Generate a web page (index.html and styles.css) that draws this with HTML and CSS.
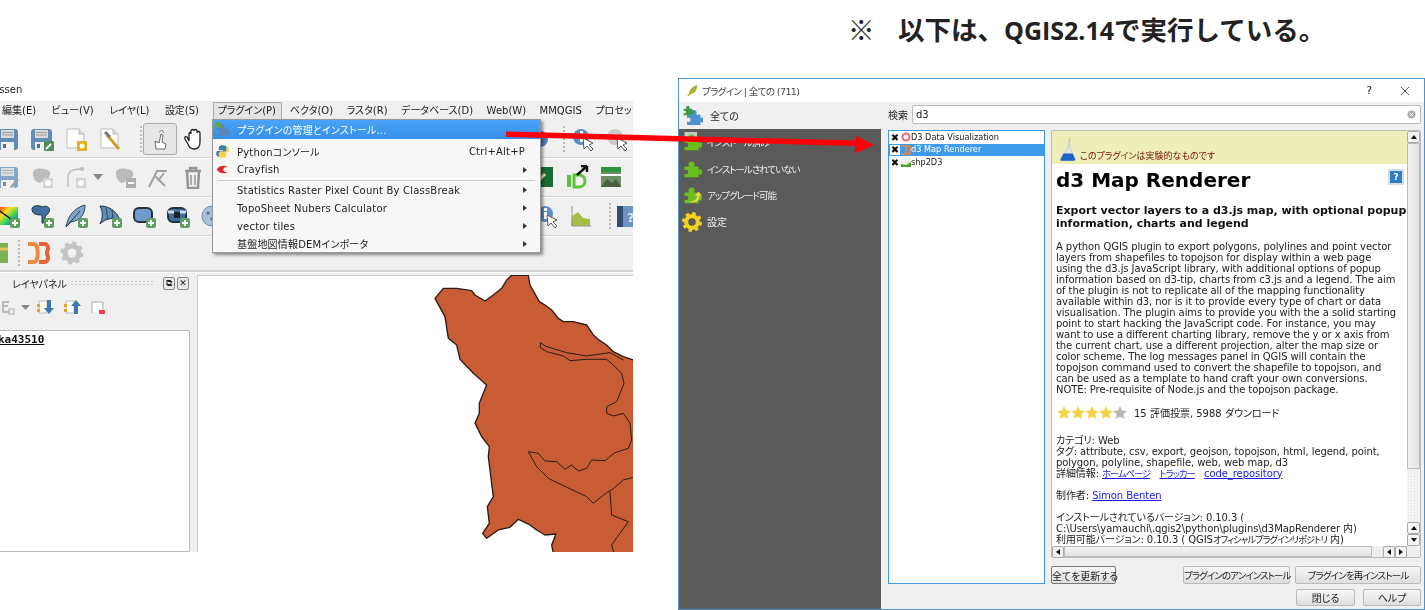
FILE: index.html
```html
<!DOCTYPE html>
<html lang="ja">
<head>
    <meta charset="UTF-8">
    <title>QGIS d3 Map Renderer</title>
    <link rel="stylesheet" href="styles.css">
</head>
<body>

<svg class="sprite" width="0" height="0">
    <defs>
        <g id="i-plus"><rect x="14" y="14" width="10" height="10" rx="2" fill="#5f9e63"/><path d="M19 16v6M16 19h6" stroke="#fff" stroke-width="2"/></g>
        <g id="i-save"><rect x="1" y="2" width="21" height="21" rx="3" fill="#5f8db8"/><rect x="5" y="3" width="13" height="8" fill="#d9d9d9"/><path d="M6 5.500h11M6 8h11" stroke="#999"/><rect x="5" y="15" width="13" height="8" fill="#f0f0f0"/><rect x="7" y="17" width="3" height="4" fill="#4c6f91"/></g>
        <g id="i-page"><path d="M3 2h12l5 5v14H3z" fill="#fff" stroke="#bbb"/><path d="M15 2v5h5" fill="#ddd" stroke="#bbb"/></g>
        <g id="i-blob"><path d="M3 8c0-5 8-5 11-4s7 1 6 6-4 3-6 5-4 4-7 2-4-5-4-9z"/></g>
        <path id="i-puzzle" d="M3 9h5.500c-2-4 .5-6 3-6s5 2 3 6H20v4c3-2 4 0 4 2.500s-1 4.500-4 2.500v4H3v-4.500c3 1.500 4.500 0 4.500-2s-1.500-3.500-4.500-2z"/>
        <g id="i-cursor"><path d="M12 11l1 11 3-3 4 5 2-2-4-4 4-2z" fill="#fff" stroke="#555"/></g>
        <g id="i-info"><circle cx="10" cy="10" r="8" fill="#5c8fc4"/><rect x="9" y="8" width="3" height="7" fill="#fff"/><rect x="9" y="4" width="3" height="3" fill="#fff"/></g>
        <path id="i-star" d="M7 0l2 4.500 5 .5-3.700 3.300 1 4.700L7 10.500 2.700 13l1-4.700L0 5l5-.5z"/>
        <filter id="rough" x="-5%" y="-5%" width="110%" height="110%">
            <feTurbulence type="fractalNoise" baseFrequency=".09" numOctaves="2" seed="4"/>
            <feDisplacementMap in="SourceGraphic" scale="3.500"/>
        </filter>
    </defs>
</svg>

<div class="slide">
    <h1 class="note"><span class="note-mark">※</span>以下は、<span class="note-latin">QGIS2.14</span>で実行している。</h1>

    <!-- QGIS main window, cropped on both sides -->
    <div class="qgis">
        <div class="qgis-title"><span>Essen</span></div>
        <div class="menubar">
            <span class="menubar-item">編集(E)</span>
            <span class="menubar-item">ビュー(V)</span>
            <span class="menubar-item">レイヤ(L)</span>
            <span class="menubar-item">設定(S)</span>
            <span class="menubar-item active">プラグイン(P)</span>
            <span class="menubar-item">ベクタ(O)</span>
            <span class="menubar-item">ラスタ(R)</span>
            <span class="menubar-item">データベース(D)</span>
            <span class="menubar-item">Web(W)</span>
            <span class="menubar-item">MMQGIS</span>
            <span class="menubar-item">プロセッシング</span>
        </div>

        <div class="toolbar row-a">
            <div class="tool"><svg viewBox="0 0 24 24"><use href="#i-save"/></svg></div>
            <div class="tool"><svg viewBox="0 0 24 24"><use href="#i-save"/><rect x="14" y="14" width="10" height="10" rx="1" fill="#4f8f55"/><path d="M16 22l5-5" stroke="#fff" stroke-width="2"/></svg></div>
            <div class="tool"><svg viewBox="0 0 24 24"><use href="#i-page"/><rect x="13" y="14" width="10" height="10" rx="1" fill="#e0b020"/><circle cx="18" cy="19" r="2.500" fill="#fff"/></svg></div>
            <div class="tool"><svg viewBox="0 0 24 24"><use href="#i-page"/><path d="M9 8l12 14" stroke="#c9a227" stroke-width="3"/><path d="M7 5l5 5" stroke="#777" stroke-width="3"/></svg></div>
            <div class="dots dots-a"></div>
            <div class="tool pressed"><svg viewBox="0 0 24 24"><path d="M8 22l-1-8 4 2 2-9 2 1-1 7 4 2-1 5z" fill="#fff" stroke="#666"/><path d="M11 5l3-2 2 3" fill="none" stroke="#888"/></svg></div>
            <div class="tool"><svg viewBox="0 0 24 24"><path d="M7 14V7c0-2 2-2 2 0V4c0-2 3-2 3 0v0c0-2 3-2 3 0v2c0-2 3-2 3 0v9c0 4-2 7-6 7-3 0-5-2-6-5l-3-5c-1-2 1-3 2-2z" fill="#fff" stroke="#222" stroke-width="1.300"/></svg></div>
            <div class="toolbar-right">
                <div class="tool tool-cut"><svg viewBox="0 0 24 24"><circle cx="12" cy="12" r="8" fill="#4c7fb5"/></svg></div>
                <div class="dots"></div>
                <div class="tool"><svg viewBox="0 0 24 24"><use href="#i-info"/><use href="#i-cursor"/></svg></div>
                <div class="tool"><svg viewBox="0 0 24 24"><circle cx="10" cy="10" r="8" fill="#ccc"/><circle cx="10" cy="10" r="3" fill="#f0f0f0"/><use href="#i-cursor"/></svg></div>
            </div>
        </div>

        <div class="toolbar row-b">
            <div class="tool off"><svg viewBox="0 0 24 24"><use href="#i-save"/><path d="M14 22l7-9 2 2-7 8z" fill="#888"/></svg></div>
            <div class="tool off"><svg viewBox="0 0 24 24"><use href="#i-blob" fill="#aaa"/><rect x="13" y="13" width="10" height="10" fill="#ccc"/><circle cx="18" cy="18" r="3" fill="#fff"/></svg></div>
            <div class="tool off"><svg viewBox="0 0 24 24"><path d="M4 22V12C4 6 10 4 17 4" fill="none" stroke="#aaa" stroke-width="1.500"/><circle cx="18" cy="4" r="2" fill="#aaa"/><rect x="12" y="13" width="10" height="10" fill="#ccc"/><circle cx="17" cy="18" r="3" fill="#fff"/></svg></div>
            <div class="caret"></div>
            <div class="tool off"><svg viewBox="0 0 24 24"><use href="#i-blob" fill="#aaa"/><rect x="13" y="13" width="10" height="10" fill="#999"/><path d="M15 18h6" stroke="#fff" stroke-width="2"/></svg></div>
            <div class="tool off"><svg viewBox="0 0 24 24"><path d="M2 22L10 6h10M8 11l10 10M17 8l-6 8" fill="none" stroke="#888" stroke-width="2"/></svg></div>
            <div class="tool off"><svg viewBox="0 0 24 24"><path d="M4 6h16M9 6V3h6v3M6 6l1 17h10l1-17" fill="none" stroke="#777" stroke-width="2.500"/><path d="M10 10v10M14 10v10" stroke="#777" stroke-width="1.500"/></svg></div>
            <div class="toolbar-right">
                <div class="tool"><svg viewBox="0 0 24 24"><rect x="2" y="2" width="20" height="20" fill="#1d6b34"/><path d="M7 16l7-7" stroke="#e5e29a" stroke-width="3"/></svg></div>
                <div class="tool"><svg viewBox="0 0 24 24"><rect x="2" y="10" width="4" height="12" fill="#5cc43c"/><path d="M9 10h5c8 0 8 12 0 12H9z" fill="none" stroke="#5cc43c" stroke-width="3"/><path d="M12 10L22 1M22 1h-6M22 1v6" stroke="#111" stroke-width="2.500"/></svg></div>
                <div class="tool"><svg viewBox="0 0 24 24"><rect x="2" y="2" width="20" height="20" fill="#6f8f62"/><rect x="2" y="2" width="20" height="5" fill="#2e9440"/><rect x="2" y="9" width="20" height="2" fill="#fff"/><path d="M2 22l6-8 5 4 4-4 5 8z" fill="#4a5d45"/></svg></div>
            </div>
        </div>

        <div class="toolbar row-c">
            <div class="tool"><svg viewBox="0 0 24 24"><defs><linearGradient id="rainbow" x1="0" y1="0" x2="1" y2="1"><stop offset="0" stop-color="#ff2020"/><stop offset=".35" stop-color="#ffe020"/><stop offset=".65" stop-color="#20d060"/><stop offset="1" stop-color="#2040ff"/></linearGradient></defs><rect x="1" y="3" width="21" height="18" fill="url(#rainbow)"/><path d="M1 5l18 13" stroke="#111" stroke-width="1.500"/><use href="#i-plus"/></svg></div>
            <div class="tool"><svg viewBox="0 0 24 24"><path d="M2 5c0-4 8-4 10-2 4-2 9 0 7 5-1 3-4 3-4 6s-1 6-3 5V11C6 11 2 10 2 5z" fill="#3e6f9e" stroke="#234"/><use href="#i-plus"/></svg></div>
            <div class="tool"><svg viewBox="0 0 24 24"><path d="M2 23C4 12 10 4 21 1c0 8-3 15-14 17z" fill="#7fa6cb" stroke="#345"/><path d="M2 23L16 7" stroke="#234"/><use href="#i-plus"/></svg></div>
            <div class="tool"><svg viewBox="0 0 24 24"><path d="M2 2c8 0 16 4 20 14-6-3-14-2-20 4 3-6 3-12 0-18z" fill="#5f8db8" stroke="#234"/><path d="M8 4l2 12M14 6l1 8" stroke="#234" stroke-width=".8"/><use href="#i-plus"/></svg></div>
            <div class="tool"><svg viewBox="0 0 24 24"><rect x="2" y="4" width="18" height="14" rx="5" fill="#6f9bd0" stroke="#234" stroke-width="2"/><use href="#i-plus"/></svg></div>
            <div class="tool"><svg viewBox="0 0 24 24"><rect x="2" y="4" width="18" height="14" rx="5" fill="#3e6f9e" stroke="#234" stroke-width="2"/><rect x="8" y="8" width="6" height="6" fill="#222"/><path d="M2 8h6M14 8h6" stroke="#cfd8e3" stroke-width="3"/><use href="#i-plus"/></svg></div>
            <div class="tool"><svg viewBox="0 0 24 24"><circle cx="12" cy="12" r="10" fill="#a9bfdc" stroke="#6f8fb5"/><circle cx="8" cy="9" r="1.500" fill="#567"/><circle cx="15" cy="8" r="1.500" fill="#567"/><circle cx="12" cy="15" r="1.500" fill="#567"/></svg></div>
            <div class="toolbar-right">
                <div class="tool"><svg viewBox="0 0 24 24"><use href="#i-info"/><use href="#i-cursor"/></svg></div>
                <div class="tool"><svg viewBox="0 0 24 24"><path d="M2 22l1-10 6-4 5 6 7 1v7z" fill="#a3bf45"/><path d="M3 2v20h19" fill="none" stroke="#999"/></svg></div>
                <div class="dots"></div>
                <div class="tool tool-help"><svg viewBox="0 0 24 24"><rect x="1" y="2" width="23" height="21" fill="#2f4d6e"/><rect x="7" y="2" width="17" height="21" fill="#6d93bf"/><text x="11" y="18" class="help-mark">?</text></svg></div>
            </div>
        </div>

        <div class="toolbar row-d">
            <div class="tool"><svg viewBox="0 0 24 24"><rect x="4" y="2" width="16" height="20" fill="#7fae55"/><path d="M4 8h16" stroke="#e8c25a" stroke-width="3"/></svg></div>
            <div class="dots"></div>
            <div class="tool"><svg viewBox="0 0 24 24"><path d="M2 3h6c5 0 5 18 0 18H2" fill="none" stroke="#f0883a" stroke-width="4"/><path d="M13 3h6c4 0 4 9 0 9 4 0 4 9 0 9h-6" fill="none" stroke="#e8623a" stroke-width="4"/></svg></div>
            <div class="tool"><svg viewBox="0 0 24 24"><circle cx="12" cy="12" r="7" fill="none" stroke="#c4c4c4" stroke-width="5"/><circle cx="12" cy="12" r="10" fill="none" stroke="#c4c4c4" stroke-width="3" stroke-dasharray="4 3.850"/></svg></div>
        </div>

        <div class="workspace">
            <div class="layer-panel">
                <div class="panel-head">
                    <span class="panel-title">レイヤパネル</span>
                    <span class="panel-grip"></span>
                    <span class="panel-btn">&#10697;</span>
                    <span class="panel-btn">&#10005;</span>
                </div>
                <div class="panel-tools">
                    <svg viewBox="0 0 110 20" class="panel-icons">
                        <path d="M9 4H3v4h5M3 8v6h6" fill="none" stroke="#aaa" stroke-width="1.500"/>
                        <rect x="9" y="11" width="5" height="5" fill="none" stroke="#aaa"/>
                        <path d="M21 7h9l-4.500 5z" fill="#888"/>
                        <path d="M39 3h8v12h-8z" fill="#fff" stroke="#bbb"/><rect x="37" y="6" width="3" height="3" fill="#f0a020"/><rect x="37" y="11" width="3" height="3" fill="#f0a020"/>
                        <path d="M47 2v8h-3l5 6 5-6h-3V2z" fill="#3f78b0"/>
                        <path d="M66 3h8v12h-8z" fill="#fff" stroke="#bbb"/><rect x="64" y="6" width="3" height="3" fill="#f0a020"/><rect x="64" y="11" width="3" height="3" fill="#f0a020"/>
                        <path d="M74 16V8h-3l5-6 5 6h-3v8z" fill="#3f78b0"/>
                        <path d="M92 15V4h11v8" fill="#fff" stroke="#aaa"/>
                        <rect x="99" y="12" width="6" height="4" fill="#f04050"/>
                    </svg>
                </div>
                <div class="layer-tree"><span class="layer-name">ka43510</span></div>
            </div>
            <div class="map">
                <svg viewBox="0 0 436 277" class="map-svg">
                    <g transform="translate(233 -5) scale(.3333)" filter="url(#rough)" stroke="#2a1c15" fill="none" stroke-width="3" stroke-linejoin="round">
                        <path fill="#c85c36" stroke-width="4" d="M245 16 L295 16 L300 45 L328 95 L345 105 L365 120 L385 145 L400 155 L430 155 L470 165 L490 195 L510 212 L530 225 L550 245 L580 260 L640 280 L640 860 L372 860 L365 825 L378 792 L345 795 L320 780 L300 765 L265 748 L240 772 L205 780 L170 805 L158 790 L178 760 L172 710 L190 680 L185 640 L180 600 L175 560 L178 530 L155 500 L135 460 L148 430 L148 400 L170 345 L130 310 L90 268 L80 225 L55 205 L45 140 L15 85 L40 55 L80 55 L125 62 L135 75 L165 93 L190 75 L215 55 L230 30 Z"/>
                        <path d="M332 218 L345 228 L410 248 L470 258 L540 248 L580 270"/>
                        <path d="M332 218 L330 232 L350 245 L400 258 L420 272 L470 268 L530 268 L550 285 L575 310 L582 340 L560 395 L530 410 L530 430 L550 438 L580 430 L600 460 L605 510 L595 535 L555 548 L525 572 L485 570 L470 595 L445 603 L425 585 L405 598 L380 575 L345 573 L325 550 L295 545 L320 590 L355 625 L375 635 L470 680 L490 700 L530 668 L545 660 L580 630 L640 615"/>
                        <path d="M540 665 L545 735 L595 755 L570 790 L545 825 L555 860"/>
                    </g>
                </svg>
            </div>
        </div>

        <!-- plugin menu opened over the toolbars -->
        <div class="menu">
            <div class="menu-row selected">
                <svg class="menu-icon" viewBox="0 0 24 24"><use href="#i-puzzle" fill="#5c86b5"/><use href="#i-puzzle" fill="#66a64a" transform="translate(-3 -4) scale(.6)"/></svg>
                <span class="menu-label">プラグインの管理とインストール...</span>
            </div>
            <div class="menu-row first">
                <svg class="menu-icon" viewBox="0 0 24 24"><path d="M12 2c-5 0-6 2-6 5v3h7v1H4c-3 0-3 9 1 9h2v-4c0-2 2-3 4-3h5c2 0 3-1 3-3V7c0-3-2-5-7-5z" fill="#3f7cb0"/><path d="M12 22c5 0 6-2 6-5v-3h-6v-1h8c3 0 3-9-1-9h-1v4c0 3-1 4-3 4H9c-2 0-3 1-3 3v2c0 3 2 5 6 5z" fill="#f5cf45"/></svg>
                <span class="menu-label">Pythonコンソール</span>
                <span class="menu-key">Ctrl+Alt+P</span>
            </div>
            <div class="menu-row crayfish">
                <svg class="menu-icon" viewBox="0 0 24 24"><path d="M20 7C12 4 5 7 3 12c2 5 9 8 17 5-5-1-8-3-7-5 0-2 3-4 7-5z" fill="#e3262b"/></svg>
                <span class="menu-label">Crayfish</span>
                <span class="menu-arrow"></span>
            </div>
            <div class="menu-sep"></div>
            <div class="menu-row"><span class="menu-icon"></span><span class="menu-label">Statistics Raster Pixel Count By ClassBreak</span><span class="menu-arrow"></span></div>
            <div class="menu-row"><span class="menu-icon"></span><span class="menu-label">TopoSheet Nubers Calculator</span><span class="menu-arrow"></span></div>
            <div class="menu-row"><span class="menu-icon"></span><span class="menu-label">vector tiles</span><span class="menu-arrow"></span></div>
            <div class="menu-row last"><span class="menu-icon"></span><span class="menu-label">基盤地図情報DEMインポータ</span><span class="menu-arrow"></span></div>
        </div>
    </div>

    <!-- plugin manager dialog -->
    <div class="dialog">
        <div class="dialog-title">
            <svg class="dialog-logo" viewBox="0 0 14 14"><path d="M3 12C3 7 6 3 12 1c0 6-3 9-7 10z" fill="#8cb63c"/><path d="M2 13L10 4" stroke="#d9a520" stroke-width="1.500"/></svg>
            <span class="dialog-name">プラグイン | 全ての (711)</span>
            <span class="win-help">?</span>
            <svg class="win-close" viewBox="0 0 12 12"><path d="M1 1l10 10M11 1L1 11" stroke="#333" stroke-width="1"/></svg>
        </div>
        <div class="dialog-body">
            <div class="sidebar">
                <div class="side-item top">
                    <svg class="side-icon" viewBox="0 0 24 24"><use href="#i-puzzle" fill="#4c93d0" transform="translate(2 2) scale(.95)"/><use href="#i-puzzle" fill="#3f9b48" transform="translate(-1 -2) scale(.6)"/></svg>
                    <span>全ての</span>
                </div>
                <div class="side-item">
                    <svg class="side-icon" viewBox="0 0 24 24"><rect x="3" y="0" width="15" height="12" fill="#c8c8c8"/><use href="#i-puzzle" fill="#6abf1c"/></svg>
                    <span class="narrow">インストール済み</span>
                </div>
                <div class="side-item">
                    <svg class="side-icon" viewBox="0 0 24 24"><use href="#i-puzzle" fill="#6abf1c"/></svg>
                    <span class="narrow">インストールされていない</span>
                </div>
                <div class="side-item">
                    <svg class="side-icon" viewBox="0 0 24 24"><use href="#i-puzzle" fill="#6abf1c"/><path d="M8 19c6 1 10-1 10-6h-3l5-5 4 5h-3c0 7-6 10-13 6z" fill="#f2d34c"/></svg>
                    <span class="narrow">アップグレード可能</span>
                </div>
                <div class="side-item">
                    <svg class="side-icon" viewBox="0 0 24 24"><circle cx="12" cy="12" r="7" fill="none" stroke="#f4d21f" stroke-width="5"/><circle cx="12" cy="12" r="10" fill="none" stroke="#f4d21f" stroke-width="4" stroke-dasharray="4 3.850"/></svg>
                    <span>設定</span>
                </div>
            </div>

            <div class="content">
                <div class="search">
                    <span class="search-label">検索</span>
                    <div class="search-box">
                        <span>d3</span>
                        <svg class="search-clear" viewBox="0 0 10 10"><circle cx="5" cy="5" r="4.500" fill="#aaa"/><path d="M3 3l4 4M7 3L3 7" stroke="#fff"/></svg>
                    </div>
                </div>

                <div class="panes">
                    <div class="plugin-list">
                        <div class="plugin-row">
                            <span class="check">&#10006;</span>
                            <svg class="plugin-icon" viewBox="0 0 10 10"><circle cx="5" cy="5" r="3.500" fill="none" stroke="#f06a6a" stroke-width="2"/></svg>
                            <span>D3 Data Visualization</span>
                        </div>
                        <div class="plugin-row selected">
                            <span class="check">&#10006;</span>
                            <svg class="plugin-icon" viewBox="0 0 10 10"><path d="M0 1h3c3 0 3 8 0 8H0M5 1h3c2 0 2 4 0 4 2 0 2 4 0 4H5" fill="none" stroke="#f0883a" stroke-width="1.600"/></svg>
                            <span>d3 Map Renderer</span>
                        </div>
                        <div class="plugin-row">
                            <span class="check">&#10006;</span>
                            <svg class="plugin-icon" viewBox="0 0 10 10"><rect width="10" height="10" fill="#eef2e6"/><path d="M0 10V7l5 1 5-3v5z" fill="#4f9e2e"/></svg>
                            <span>shp2D3</span>
                        </div>
                    </div>

                    <div class="right-col">
                        <div class="details">
                            <div class="details-main">
                                <div class="details-view">
                                    <div class="banner">
                                        <svg class="flask" viewBox="0 0 20 26"><path d="M12 0l-2 8v3L2 23c-1 2 0 3 2 3h12c2 0 3-1 2-3l-6-12z" fill="#dfe6e8" stroke="#aab"  stroke-width=".5"/><path d="M5 18h10l3 6c0 1-1 2-2 2H3c-1 0-2-1-1-2z" fill="#1f62c8"/></svg>
                                        <span>このプラグインは実験的なものです</span>
                                    </div>
                                    <div class="doc">
                                        <div class="doc-head">
                                            <h2>d3 Map Renderer</h2>
                                            <span class="doc-help">?</span>
                                        </div>
                                        <h3>Export vector layers to a d3.js map, with optional popup<br>information, charts and legend</h3>
                                        <p>A python QGIS plugin to export polygons, polylines and point vector<br>
                                        layers from shapefiles to topojson for display within a web page<br>
                                        using the d3.js JavaScript library, with additional options of popup<br>
                                        information based on d3-tip, charts from c3.js and a legend. The aim<br>
                                        of the plugin is not to replicate all of the mapping functionality<br>
                                        available within d3, nor is it to provide every type of chart or data<br>
                                        visualisation. The plugin aims to provide you with the a solid starting<br>
                                        point to start hacking the JavaScript code. For instance, you may<br>
                                        want to use a different charting library, remove the y or x axis from<br>
                                        the current chart, use a different projection, alter the map size or<br>
                                        color scheme. The log messages panel in QGIS will contain the<br>
                                        topojson command used to convert the shapefile to topojson, and<br>
                                        can be used as a template to hand craft your own conversions.<br>
                                        NOTE: Pre-requisite of Node.js and the topojson package.</p>
                                        <div class="rating">
                                            <svg class="stars" viewBox="0 0 70 14">
                                                <use href="#i-star" fill="#f2d544"/>
                                                <use href="#i-star" fill="#f2d544" x="14"/>
                                                <use href="#i-star" fill="#f2d544" x="28"/>
                                                <use href="#i-star" fill="#f2d544" x="42"/>
                                                <use href="#i-star" fill="#b5b5b5" x="56"/>
                                            </svg>
                                            <span>15 評価投票, 5988 ダウンロード</span>
                                        </div>
                                        <p class="meta">カテゴリ: Web<br>
                                        タグ: attribute, csv, export, geojson, topojson, html, legend, point,<br>
                                        polygon, polyline, shapefile, web, web map, d3<br>
                                        詳細情報: <a href="#" class="kana">ホームページ</a> &nbsp; <a href="#" class="kana">トラッカー</a> &nbsp; <a href="#">code_repository</a></p>
                                        <p>制作者: <a href="#">Simon Benten</a></p>
                                        <p>インストールされているバージョン: 0.10.3 (<br>
                                        C:\Users\yamauchi\.qgis2\python\plugins\d3MapRenderer 内)<br>
                                        利用可能バージョン: 0.10.3 ( QGIS<span class="kana">オフィシャルプラグインリポジトリ</span> 内)</p>
                                    </div>
                                </div>
                                <div class="vscroll">
                                    <span class="arrow-btn up"></span>
                                    <span class="vthumb"></span>
                                    <span class="vtrack"></span>
                                    <span class="arrow-btn up"></span>
                                    <span class="arrow-btn down"></span>
                                </div>
                            </div>
                            <div class="hscroll">
                                <span class="arrow-btn left"></span>
                                <span class="hthumb"></span>
                                <span class="htrack"></span>
                                <span class="arrow-btn left"></span>
                                <span class="arrow-btn right"></span>
                                <span class="scroll-corner"></span>
                            </div>
                        </div>
                        <div class="actions">
                            <button class="btn btn-update">全てを更新する</button>
                            <button class="btn btn-remove">プラグインのアンインストール</button>
                            <button class="btn btn-reinstall">プラグインを再インストール</button>
                        </div>
                    </div>
                </div>

                <div class="footer">
                    <button class="btn btn-close">閉じる</button>
                    <button class="btn btn-help">ヘルプ</button>
                </div>
            </div>
        </div>
    </div>

    <!-- red arrow drawn on top of the two screenshots -->
    <svg class="red-arrow" viewBox="0 0 1425 610">
        <path d="M506 131.500L856 140.500V136L874 145 855 153.500V146L506 137z" fill="#fb0007"/>
    </svg>
</div>

</body>
</html>
```

FILE: styles.css
```css
* {
    box-sizing: border-box;
}
body {
    margin: 0;
    background-color: #fff;
    font-family: "DejaVu Sans", "Noto Sans CJK JP", sans-serif;
    font-size: 10px;
    font-feature-settings: "palt";
    color: #222;
}
.sprite {
    position: absolute;
}
.slide {
    position: relative;
    width: 1425px;
    height: 610px;
    overflow: hidden;
}
.note {
    margin: 0;
    padding: 10px 0 0 848px;
    font-family: "Noto Sans CJK JP", sans-serif;
    font-feature-settings: normal;
    font-size: 26.500px;
    line-height: 38px;
    font-weight: 700;
    color: #222;
    white-space: nowrap;
}
.note-mark {
    display: inline-block;
    width: 50px;
}
.note-latin {
    font-family: "Open Sans", sans-serif;
    font-size: 25px;
}

/* main window */
.qgis {
    position: absolute;
    left: 0;
    top: 78px;
    width: 633px;
    height: 474px;
    overflow: hidden;
    background: #f0f0f0;
    filter: blur(.3px);
}
.qgis-title {
    height: 23px;
    padding-top: 6px;
    background: #fff;
    line-height: 12px;
    margin-left: -7px;
}
.menubar {
    display: flex;
    align-items: center;
    height: 20px;
    padding-left: 2px;
    white-space: nowrap;
}
.menubar-item {
    margin-right: 15.500px;
    line-height: 16px;
}
.menubar-item.active {
    margin: 0 8px 0 -2px;
    padding: 0 5px 0 4px;
    background: #e4e4e4;
    border: 1px solid #aaa;
}
.menubar-item.active ~ .menubar-item {
    margin-right: 13.500px;
}
.toolbar {
    display: flex;
    align-items: center;
    border-bottom: 1px solid #d4d4d4;
    box-shadow: 0 1px 0 #fff;
    margin-left: -9px;
}
.row-a {
    height: 37px;
}
.row-b, .row-c {
    height: 39px;
}
.row-d {
    height: 36px;
    margin-left: -17px;
    border-bottom-width: 2px;
}
.tool {
    display: flex;
    justify-content: center;
    align-items: center;
    flex: 0 0 34px;
    height: 32px;
}
.tool svg {
    width: 24px;
    height: 24px;
}
.tool.pressed {
    background: #e6e6e6;
    border: 1px solid #aaa;
    border-radius: 3px;
}
.tool.off {
    opacity: .75;
}
.dots {
    flex: 0 0 4px;
    height: 28px;
    background-image: radial-gradient(#bbb 1px, transparent 1px);
    background-size: 4px 4px;
}
.dots-a {
    margin-left: 12px;
}
.caret {
    flex: 0 0 15px;
    height: 6px;
    background: #888;
    clip-path: polygon(0 0, 10px 0, 5px 100%);
}
.toolbar-right {
    display: flex;
    align-items: center;
    margin-left: auto;
}
.row-a .toolbar-right {
    margin-right: -1px;
}
.row-b .toolbar-right {
    margin-right: 5px;
}
.row-c .toolbar-right {
    margin-right: -12px;
}
.row-c .dots {
    margin: 0 0 0 10px;
}
.row-c .tool-help {
    margin-left: -1px;
}
.help-mark {
    font-size: 13px;
    font-weight: 700;
    fill: #dfe8f2;
}
.tool-cut {
    margin-right: 5px;
}

/* dock area */
.workspace {
    display: flex;
    height: 277px;
    margin-top: 3px;
}
.layer-panel {
    display: flex;
    flex-direction: column;
    flex: 0 0 197px;
    padding-right: 7px;
}
.panel-head {
    display: flex;
    align-items: center;
    height: 16px;
    margin-bottom: 4px;
    padding-left: 12px;
    gap: 2px;
}
.panel-title {
    width: 50px;
    white-space: nowrap;
}
.panel-grip {
    width: 85px;
    height: 6px;
    margin: 0 6px 0 6px;
    background-image: radial-gradient(#ccc 1px, transparent 1px);
    background-size: 4px 3px;
}
.panel-btn {
    display: flex;
    justify-content: center;
    align-items: center;
    width: 12px;
    height: 13px;
    font-size: 9px;
    background: #e8e8e8;
    border: 1px solid #888;
    border-radius: 2px;
}
.panel-tools {
    height: 35px;
    padding-top: 3px;
}
.panel-icons {
    width: 110px;
    height: 20px;
    display: block;
}
.layer-tree {
    flex: 1;
    margin-left: -2px;
    padding-top: 2px;
    background: #fff;
    border: 1px solid #bbb;
    border-radius: 0 2px 0 0;
}
.layer-name {
    font-family: "DejaVu Sans Mono", monospace;
    font-size: 11px;
    font-weight: 700;
    text-decoration: underline;
    margin-left: -1px;
    color: #111;
}
.map {
    flex: 1;
    background: #fff;
    box-shadow: inset 1px 1px 0 #ccc;
}
.map-svg {
    display: block;
    width: 436px;
    height: 277px;
}

/* plugin menu */
.menu {
    position: absolute;
    left: 212px;
    top: 41px;
    width: 329px;
    height: 134px;
    background: #f7f7f7;
    border: 1px solid #999;
    box-shadow: 2px 2px 3px rgba(0, 0, 0, .45);
}
.menu-row {
    display: flex;
    align-items: center;
    height: 18px;
    padding: 0 13px 0 0;
    white-space: nowrap;
    letter-spacing: .2px;
}
.menu-row.selected {
    height: 19px;
    background: linear-gradient(#4aa3f7, #3590e8);
    color: #fff;
}
.menu-row.first {
    margin-top: 3px;
}
.menu-row.crayfish {
    height: 19px;
}
.menu-row.last {
    height: 17px;
}
.menu-icon {
    flex: 0 0 15px;
    width: 15px;
    height: 15px;
    margin: 0 7px 0 2px;
}
.menu-label {
    flex: 1;
}
.menu-key {
    margin-right: 2px;
}
.menu-arrow {
    width: 0;
    height: 0;
    border-left: 4px solid #333;
    border-top: 3.500px solid transparent;
    border-bottom: 3.500px solid transparent;
}
.menu-sep {
    height: 1px;
    margin: 1px 5px 0 5px;
    background: #ccc;
}

/* dialog */
.dialog {
    position: absolute;
    left: 678px;
    top: 78px;
    width: 747px;
    height: 532px;
    display: flex;
    flex-direction: column;
    background: #f0f0f0;
    border: 1px solid #4d93c9;
    filter: blur(.3px);
}
.dialog-title {
    display: flex;
    align-items: center;
    flex: 0 0 23px;
    padding: 0 14px 0 7px;
    background: #fff;
}
.dialog-logo {
    width: 13px;
    height: 13px;
    margin-right: 3px;
}
.dialog-name {
    flex: 1;
    font-size: 9.500px;
    letter-spacing: -.6px;
    color: #444;
}
.win-help {
    margin-right: 28px;
    font-size: 11px;
}
.win-close {
    width: 10px;
    height: 10px;
}
.dialog-body {
    display: flex;
    flex: 1;
    min-height: 0;
}
.sidebar {
    flex: 0 0 202px;
    background: #5a5a5a;
    color: #eee;
}
.side-item {
    display: flex;
    align-items: center;
    height: 26.500px;
    padding-left: 3px;
    white-space: nowrap;
}
.side-item .narrow {
    font-size: 9.500px;
    letter-spacing: -1px;
}
.side-item.top {
    height: 27px;
    padding-left: 4px;
    background: #f0f0f0;
    color: #222;
}
.side-icon {
    flex: 0 0 20px;
    width: 20px;
    height: 20px;
    margin-right: 5px;
}
.side-item.top .side-icon {
    margin-right: 7px;
}
.content {
    display: flex;
    flex-direction: column;
    flex: 1;
    padding: 3px 3px 3px 7px;
    min-width: 0;
}
.search {
    display: flex;
    align-items: center;
    flex: 0 0 19px;
    gap: 4px;
    margin-bottom: 6px;
}
.search-box {
    display: flex;
    justify-content: space-between;
    align-items: center;
    flex: 1;
    height: 19px;
    padding: 0 4px 0 3px;
    background: #fff;
    border: 1px solid #bbb;
    border-radius: 2px;
}
.search-clear {
    width: 9px;
    height: 9px;
}
.panes {
    display: flex;
    flex: 1;
    gap: 6px;
    min-height: 0;
    margin-bottom: 5px;
}
.plugin-list {
    flex: 0 0 157px;
    background: #fff;
    border: 1px solid #3d9be9;
}
.plugin-row {
    display: flex;
    align-items: center;
    height: 12.500px;
    padding: 0 0 1.500px 1px;
    font-size: 8.200px;
    white-space: nowrap;
}
.plugin-row.selected {
    background: #3d9be9;
    color: #fff;
}
.check {
    display: flex;
    justify-content: center;
    align-items: center;
    width: 10px;
    height: 10px;
    margin-top: 1.500px;
    background: #fff;
    color: #111;
    font-size: 10px;
}
.plugin-icon {
    width: 10px;
    height: 10px;
    margin: 1.500px 0 0 1px;
}
.right-col {
    display: flex;
    flex-direction: column;
    flex: 1;
    min-width: 0;
}
.details {
    display: flex;
    flex-direction: column;
    height: 428px;
    background: #f0f0f0;
    border: 1px solid #bbb;
    border-radius: 2px;
}
.details-main {
    display: flex;
    flex: 1;
    min-height: 0;
}
.details-view {
    flex: 1;
    min-width: 0;
    overflow: hidden;
    background: #fff;
}
.banner {
    display: flex;
    align-items: flex-end;
    height: 33px;
    padding: 0 0 2px 7px;
    background: #eeeeb9;
    color: #7a0d0d;
    font-size: 9px;
}
.flask {
    width: 18px;
    height: 26px;
    margin-right: 3px;
}
.doc {
    padding: 4px 0 0 4px;
}
.doc-head {
    display: flex;
    justify-content: space-between;
    height: 24px;
}
.doc-head h2 {
    margin: 0;
    font-size: 20px;
    line-height: 24px;
    color: #000;
}
.doc-help {
    display: flex;
    justify-content: center;
    align-items: center;
    width: 16px;
    height: 16px;
    margin: 1px 3px 0 0;
    background: #2f7fc4;
    border: 2px solid #d5dde6;
    color: #fff;
    font-size: 9px;
    font-weight: 700;
}
.doc h3 {
    margin: 12px 0 0;
    font-size: 11px;
    line-height: 13px;
    color: #111;
}
.doc p {
    margin: 11px 0 0;
    line-height: 11px;
    letter-spacing: -.08px;
    white-space: nowrap;
}
.doc a {
    color: #1a1ae6;
}
.doc .kana {
    font-size: 9.200px;
    letter-spacing: -.9px;
}
.rating {
    display: flex;
    align-items: center;
    height: 12px;
    margin-top: 11.500px;
    padding-left: 1px;
    gap: 7px;
}
.stars {
    width: 70px;
    height: 14px;
}
.doc .meta {
    margin-top: 16px;
}
.vscroll {
    display: flex;
    flex-direction: column;
    flex: 0 0 13px;
    background: #f4f4f4;
}
.arrow-btn {
    display: flex;
    justify-content: center;
    align-items: center;
    flex: 0 0 12px;
    height: 12px;
    background: #f5f5f5;
    border: 1px solid #aaa;
    border-radius: 2px;
}
.arrow-btn::before {
    content: "";
    border: 3px solid transparent;
}
.arrow-btn.up::before {
    border-bottom: 4px solid #111;
    border-top: 0;
}
.arrow-btn.down::before {
    border-top: 4px solid #111;
    border-bottom: 0;
}
.arrow-btn.left::before {
    border-right: 4px solid #111;
    border-left: 0;
}
.arrow-btn.right::before {
    border-left: 4px solid #111;
    border-right: 0;
}
.vthumb {
    flex: 0 0 326px;
    background: linear-gradient(90deg, #f4f4f4, #e2e2e2);
    border: 1px solid #bbb;
}
.vtrack {
    flex: 1;
    background-image: radial-gradient(#ddd 1px, transparent 1px);
    background-size: 3px 3px;
}
.hscroll {
    display: flex;
    flex: 0 0 11px;
    height: 11px;
}
.hthumb {
    flex: 0 0 308px;
    background: linear-gradient(#f4f4f4, #e2e2e2);
    border: 1px solid #bbb;
}
.htrack {
    flex: 1;
    background-image: radial-gradient(#ddd 1px, transparent 1px);
    background-size: 3px 3px;
}
.scroll-corner {
    flex: 0 0 13px;
}
.actions {
    display: flex;
    height: 18px;
    margin-top: 8px;
}
.btn {
    padding: 0;
    font: inherit;
    font-feature-settings: "palt";
    color: #222;
    white-space: nowrap;
    background: linear-gradient(#f7f7f7, #dedede);
    border: 1px solid #bbb;
    border-radius: 2px;
}
.btn-update {
    width: 65px;
    border-color: #777;
}
.btn-remove {
    width: 107px;
    margin-left: 67px;
    font-size: 9.500px;
    letter-spacing: -.9px;
}
.btn-reinstall {
    width: 126px;
    margin-left: 5px;
    font-size: 9.500px;
    letter-spacing: -.8px;
}
.footer {
    display: flex;
    justify-content: flex-end;
    flex: 0 0 17px;
    gap: 8px;
}
.btn-close {
    width: 59px;
}
.btn-help {
    width: 58px;
}
.red-arrow {
    position: absolute;
    left: 0;
    top: 0;
    width: 1425px;
    height: 610px;
    pointer-events: none;
}
```
